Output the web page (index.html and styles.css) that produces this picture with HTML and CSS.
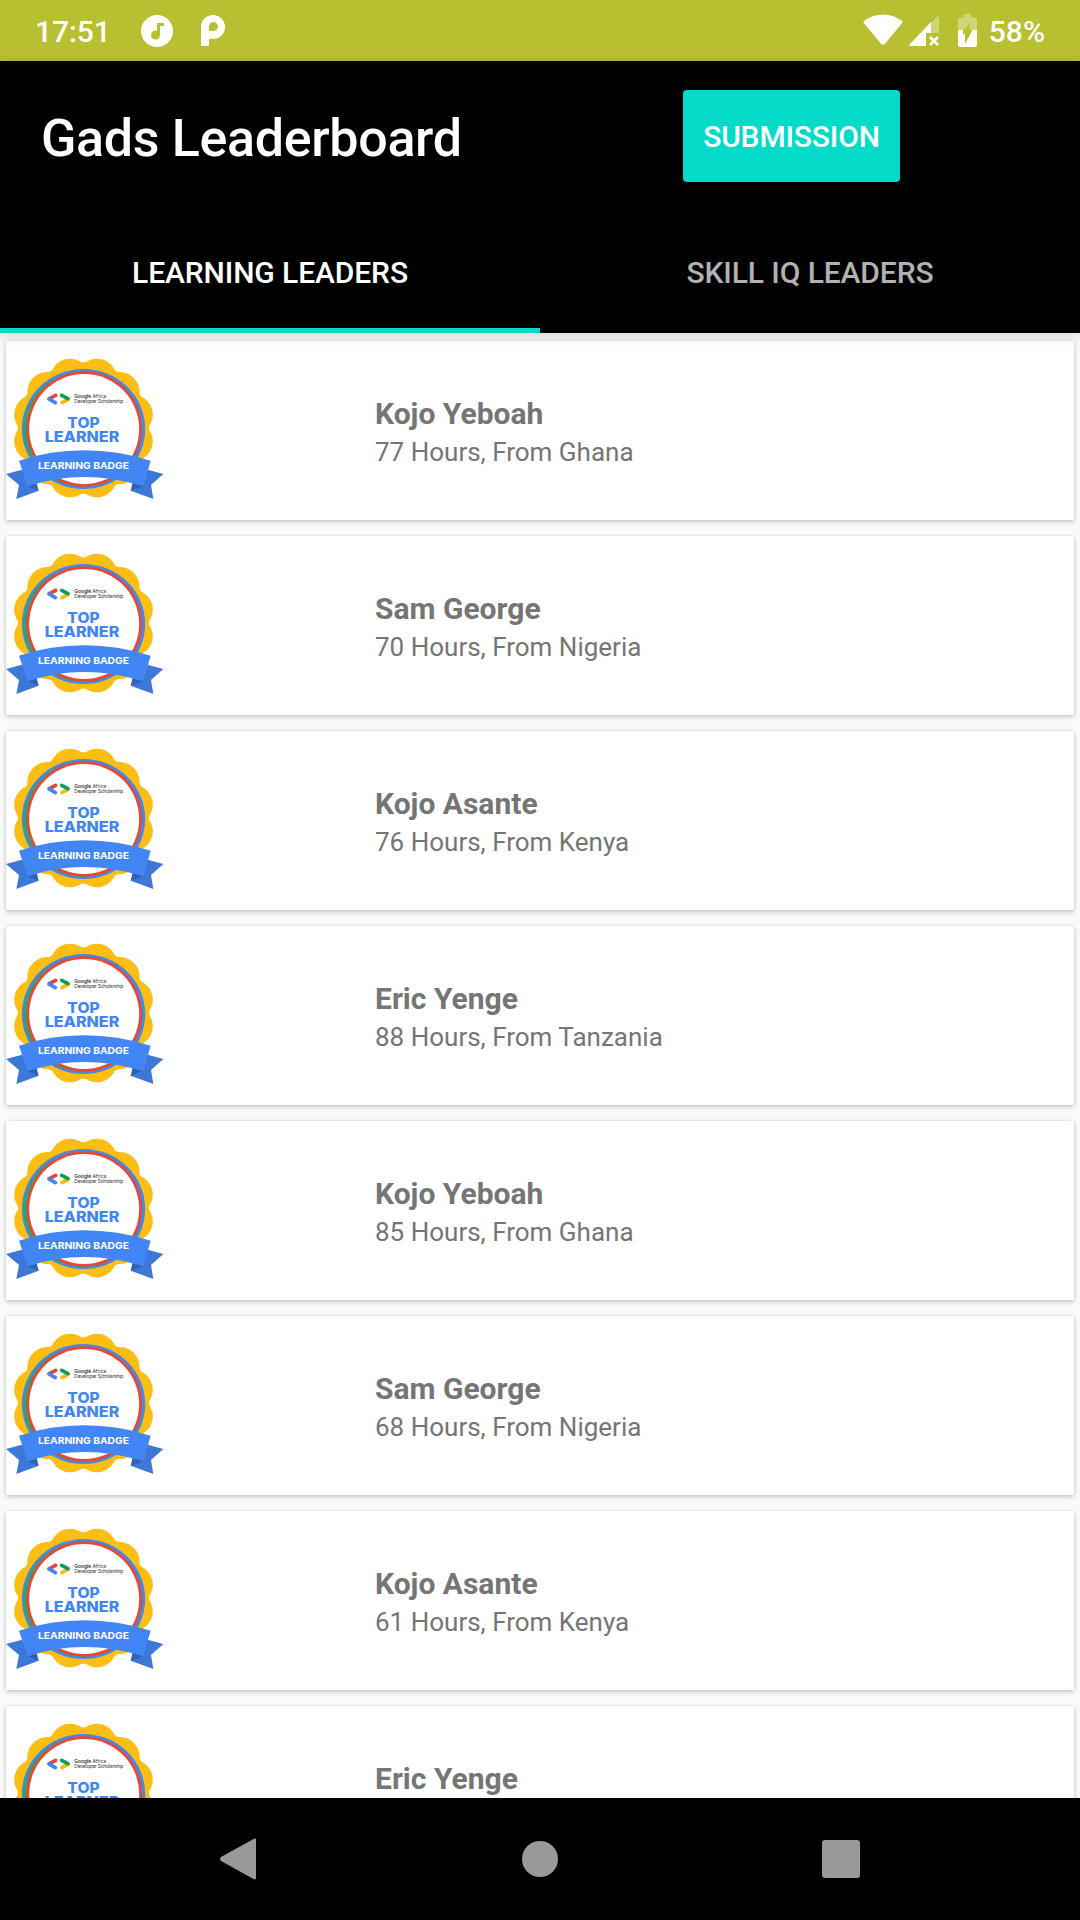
FILE: index.html
```html
<!DOCTYPE html>
<html lang="en">
<head>
<meta charset="utf-8">
<title>Gads Leaderboard</title>
<link rel="stylesheet" href="styles.css">
</head>
<body>
<div class="status-bar">
  <span class="clock">17:51</span>
  <svg class="icon-music" viewBox="0 0 32 32"><circle cx="16" cy="16" r="16" fill="#fff"/><path fill="#b8bf30" d="M16 8h7v3h-4v9a4.500 4.500 0 1 1-3-4.200z"/></svg>
  <svg class="icon-p" viewBox="0 0 24 31"><path fill="#fff" fill-rule="evenodd" d="M0 31V12A12 12 0 1 1 12 24H8V31ZM8 16V12A4.500 4.500 0 1 1 12.500 16Z"/></svg>
  <span class="spacer"></span>
  <svg class="icon-wifi" viewBox="0 0 40 32"><path fill="#fff" d="M1.200 9.500Q-.5 8 1.500 6.500C12-1.500 28-1.500 38.500 6.500Q40.500 8 38.800 9.500L22 29.700Q20 32 18 29.700Z"/></svg>
  <svg class="icon-signal" viewBox="0 0 30 31"><path fill="#fff" fill-opacity=".35" d="M29 1Q30 0 30 2V18H22V8Z"/><path fill="#fff" d="M22 7V18H17V31H1Q-.5 30 1 29Z"/><path stroke="#fff" stroke-width="2.600" d="M21 22L29 30M29 22L21 30"/></svg>
  <svg class="icon-battery" viewBox="0 0 19 33"><path fill="#fff" fill-opacity=".35" d="M6 0H13V3.500H17Q19 3.500 19 5.500V16H0V5.500Q0 3.500 2 3.500H6Z"/><path fill="#fff" d="M0 16H19V31Q19 33 17 33H2Q0 33 0 31Z"/><path fill="#b8bf30" d="M14 17L7 30V20H5V16H14Z"/><path fill="#b8bf30" fill-opacity=".75" d="M12 8.500V16H5Z"/></svg>
  <span class="percent">58%</span>
</div>

<header class="app-bar">
  <div class="toolbar">
    <h1 class="title">Gads Leaderboard</h1>
    <button class="submit">SUBMISSION</button>
  </div>
  <nav class="tabs">
    <a class="tab active">LEARNING LEADERS</a>
    <a class="tab">SKILL IQ LEADERS</a>
  </nav>
</header>

<main class="list">
  <article class="card">
    <svg class="badge" viewBox="18 33 540 537">
      <g id="badge">
        <g fill="#fdbe14" transform="translate(250.5 294)">
          <circle r="197"/>
          <path d="M0-193A60 60 0 0 1 96.500-167.100A60 60 0 0 1 167.100-96.500A60 60 0 0 1 193 0A60 60 0 0 1 167.100 96.500A60 60 0 0 1 96.500 167.100A60 60 0 0 1 0 193A60 60 0 0 1-96.500 167.100A60 60 0 0 1-167.100 96.500A60 60 0 0 1-193 0A60 60 0 0 1-167.100-96.500A60 60 0 0 1-96.500-167.100A60 60 0 0 1 0-193Z"/>
        </g>
        <ellipse cx="250.500" cy="297" rx="185" ry="180" fill="#4687e8"/>
        <ellipse cx="249" cy="298" rx="178" ry="172" fill="#34a462"/>
        <circle cx="254" cy="297" r="174" fill="#4687e8"/>
        <circle cx="251" cy="298" r="173" fill="#34a462"/>
        <circle cx="252.500" cy="297" r="173" fill="#ea4535"/>
        <circle cx="252.500" cy="297" r="165" fill="#fff"/>
        <g stroke-width="11" stroke-linecap="round" fill="none">
          <path d="M148 206L167 196" stroke="#ea4335"/>
          <path d="M147 207L166 218" stroke="#4285f4"/>
          <path d="M204 208L186 218" stroke="#fbbc04"/>
          <path d="M185 196L204 206" stroke="#0f9d58"/>
        </g>
        <g class="badge-small">
          <text x="223" y="203" textLength="96"><tspan font-weight="600">Google</tspan> Africa</text>
          <text x="223" y="220" textLength="147">Developer Scholarship</text>
        </g>
        <g class="badge-title">
          <text x="202" y="294" textLength="97" lengthAdjust="spacingAndGlyphs">TOP</text>
          <text x="134" y="335" textLength="224" lengthAdjust="spacingAndGlyphs">LEARNER</text>
        </g>
        <path fill="#3d78d8" d="M18 432L66 419L116 482L49 507L57 465ZM490 432L443 419L392 482L460 507L453 465Z"/>
        <path fill="#2f62b5" d="M83 469L110 459L116 482ZM430 469L398 457L392 482Z"/>
        <path fill="#4285f4" d="M57 392Q250 330 452 392L430 469Q250 413 83 469Z"/>
        <text class="badge-ribbon" x="114" y="417" textLength="273" lengthAdjust="spacingAndGlyphs">LEARNING BADGE</text>
      </g>
    </svg>
    <div class="info"><h2 class="name">Kojo Yeboah</h2><p class="detail">77 Hours, From Ghana</p></div>
  </article>
  <article class="card"><svg class="badge" viewBox="18 33 540 537"><use href="#badge"/></svg><div class="info"><h2 class="name">Sam George</h2><p class="detail">70 Hours, From Nigeria</p></div></article>
  <article class="card"><svg class="badge" viewBox="18 33 540 537"><use href="#badge"/></svg><div class="info"><h2 class="name">Kojo Asante</h2><p class="detail">76 Hours, From Kenya</p></div></article>
  <article class="card"><svg class="badge" viewBox="18 33 540 537"><use href="#badge"/></svg><div class="info"><h2 class="name">Eric Yenge</h2><p class="detail">88 Hours, From Tanzania</p></div></article>
  <article class="card"><svg class="badge" viewBox="18 33 540 537"><use href="#badge"/></svg><div class="info"><h2 class="name">Kojo Yeboah</h2><p class="detail">85 Hours, From Ghana</p></div></article>
  <article class="card"><svg class="badge" viewBox="18 33 540 537"><use href="#badge"/></svg><div class="info"><h2 class="name">Sam George</h2><p class="detail">68 Hours, From Nigeria</p></div></article>
  <article class="card"><svg class="badge" viewBox="18 33 540 537"><use href="#badge"/></svg><div class="info"><h2 class="name">Kojo Asante</h2><p class="detail">61 Hours, From Kenya</p></div></article>
  <article class="card"><svg class="badge" viewBox="18 33 540 537"><use href="#badge"/></svg><div class="info"><h2 class="name">Eric Yenge</h2></div></article>
</main>

<footer class="nav-bar">
  <svg class="nav-icon" viewBox="0 0 42 42"><path d="M37 .8Q39 0 39 2V40Q39 42 37 41.200L4 23Q2 21 4 19Z"/></svg>
  <svg class="nav-icon" viewBox="0 0 42 42"><circle cx="21" cy="21" r="18"/></svg>
  <svg class="nav-icon" viewBox="0 0 42 42"><rect x="2" y="2" width="38" height="38" rx="3"/></svg>
</footer>
</body>
</html>
```
FILE: styles.css
```css
* { box-sizing: border-box; margin: 0; padding: 0; }

body {
  width: 1080px;
  height: 1920px;
  display: flex;
  flex-direction: column;
  overflow: hidden;
  background: #fafafa;
  font-family: Roboto, "Liberation Sans", sans-serif;
}

svg { display: block; flex: none; }

.status-bar {
  flex: none;
  height: 61px;
  padding: 0 35px 0 35px;
  display: flex;
  align-items: center;
  background: #b8bf30;
  color: #fff;
  font-size: 30px;
  font-weight: 500;
}
.clock { width: 106px; letter-spacing: -.1px; padding-top: 1px; }
.icon-music { width: 32px; height: 32px; }
.icon-p { width: 24px; height: 31px; margin-left: 28px; }
.spacer { flex: 1; }
.icon-wifi { width: 40px; height: 32px; margin: -2px 6px 0 0; }
.icon-signal { width: 30px; height: 31px; margin-right: 19px; }
.icon-battery { width: 19px; height: 33px; margin-right: 12px; }
.percent { padding-top: 1px; }

.app-bar {
  position: relative;
  z-index: 1;
  flex: none;
  height: 272px;
  display: flex;
  flex-direction: column;
  background: #000;
  color: #fff;
  box-shadow: 0 3px 12px rgba(0, 0, 0, .16);
}
.toolbar {
  height: 150px;
  padding: 0 180px 0 41px;
  display: flex;
  align-items: center;
  justify-content: space-between;
}
.title { padding-top: 4px; font-size: 52px; font-weight: 500; letter-spacing: -.33px; }
.submit {
  width: 217px;
  height: 92px;
  border: 0;
  border-radius: 4px;
  background: #03dbc8;
  color: #fff;
  font: 500 30px Roboto, sans-serif;
  letter-spacing: -.15px;
}
.tabs { flex: 1; display: flex; }
.tab {
  flex: 1;
  display: flex;
  align-items: center;
  justify-content: center;
  padding-top: 6px;
  border-bottom: 5px solid transparent;
  color: #b2b2b2;
  font-size: 30px;
  font-weight: 500;
  letter-spacing: -.1px;
}
.tab.active { color: #fff; border-color: #03dbc8; }

.list {
  flex: 1;
  min-height: 0;
  overflow: hidden;
  padding: 8px 6px 0;
  display: flex;
  flex-direction: column;
  gap: 16px;
}
.card {
  flex: none;
  height: 179px;
  display: flex;
  background: #fff;
  box-shadow: 0 2px 5px rgba(0, 0, 0, .2), 0 0 2px rgba(0, 0, 0, .12);
}
.badge { width: 180px; height: 179px; }
.info { padding: 54px 0 0 189px; color: #757575; }
.name { font-size: 30px; font-weight: 700; line-height: 38px; }
.detail { font-size: 26px; line-height: 38px; }

.badge-small { font: 15px Inter, sans-serif; fill: #333; }
.badge-title { font: 800 45px Inter, sans-serif; fill: #4285f4; }
.badge-ribbon { font: 700 28px Inter, sans-serif; fill: #fff; }

.nav-bar {
  flex: none;
  height: 122px;
  padding: 0 218px 0 217px;
  display: flex;
  align-items: center;
  justify-content: space-between;
  background: #000;
}
.nav-icon { width: 42px; height: 42px; fill: #999; }
```
